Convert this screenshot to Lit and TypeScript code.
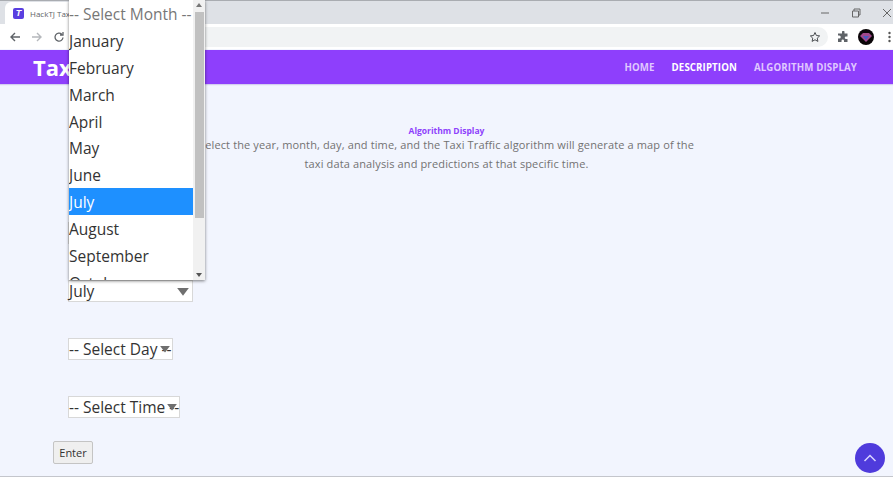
import { LitElement, html, css } from "lit";
import { customElement } from "lit/decorators.js";

const months = ["January","February","March","April","May","June","July","August","September","October"];

@customElement("app-root")
export class AppRoot extends LitElement {
  static styles = css`
    :host { display: block; position: relative; width: 893px; height: 477px; overflow: hidden; background: #f2f5fe; font-family: "Open Sans", sans-serif; color: #333; }
    .tabs { height: 23px; background: #dee1e6; border-top: 1px solid #a9acb1; display: flex; align-items: flex-end; }
    .tab { margin-left: 5px; width: 200px; height: 22px; background: #fff; border-radius: 6px 6px 0 0; display: flex; align-items: center; gap: 6px; padding-left: 8px; box-sizing: border-box; font-size: 8px; color: #5f6368; white-space: nowrap; overflow: hidden; }
    .fav { width: 11px; height: 11px; border-radius: 2px; background: #5a3fe0; color: #fff; font: italic bold 9px/11px "Liberation Sans", sans-serif; text-align: center; flex: none; }
    .spacer { flex: 1; }
    .win { display: flex; align-items: center; gap: 21px; padding-right: 1px; height: 22px; }
    .toolbar { height: 25px; background: #fff; display: flex; align-items: center; padding-left: 9px; box-sizing: border-box; }
    .navbtns { display: flex; gap: 10px; align-items: center; }
    .omni { flex: 1; height: 20px; margin-left: 8px; margin-right: 9px; background: #f1f3f4; border-radius: 10px; display: flex; justify-content: flex-end; align-items: center; padding-right: 7px; }
    .tools { display: flex; align-items: center; gap: 9px; padding-right: 2px; }
    .tools .dots { margin-left: 5px; }
    .avatar { width: 16px; height: 16px; border-radius: 50%; background: #0a0508; display: flex; align-items: center; justify-content: center; }
    nav { height: 34px; margin-top: 1px; background: #8e3ffc; display: flex; align-items: center; padding: 0 36px 0 33px; box-shadow: 0 1px 1px rgba(120,90,200,.25); }
    .brand { font-size: 22px; font-weight: 700; color: #fff; }
    .links { margin-left: auto; display: flex; gap: 17px; font-size: 9.7px; font-weight: 700; color: #e0c8ff; letter-spacing: 0.11px; }
    .links .on { color: #fff; }
    main { padding: 41px 0 0 53px; position: relative; }
    .head { margin-left: -53px; text-align: center; height: 48px; }
    .eyebrow { font-size: 8.5px; font-weight: 700; color: #8e3ffc; line-height: 12px; }
    .desc { font-size: 11px; line-height: 18.6px; color: #727272; letter-spacing: 0.13px; margin-top: -1px; }
    .selects { display: flex; flex-direction: column; align-items: flex-start; gap: 36px; margin-left: 15px; margin-top: 49px; }
    .sel { height: 22px; box-sizing: border-box; background: #fff; border: 1px solid #d8d8d8; font-size: 15.5px; line-height: 19px; color: #333; display: flex; align-items: center; white-space: nowrap; position: relative; }
    .sel svg { position: absolute; top: 7px; }
    .year { width: 100px; } .month { width: 125px; } .day { width: 105px; } .time { width: 112px; }
    button { display: block; margin-top: 23px; width: 40px; height: 23px; padding: 0; background: #efefef; border: 1px solid #c4c4c4; border-radius: 2px; font: 11px "Open Sans", sans-serif; color: #333; }
    .list { position: absolute; left: 69px; top: 0; width: 136px; height: 280px; background: #fff; box-shadow: 0 1px 3px rgba(0,0,0,.5); overflow: hidden; display: flex; }
    .items { flex: 1; font-size: 15.5px; color: #333; overflow: hidden; }
    .opt { height: 26.9px; line-height: 28.5px; white-space: nowrap; }
    .opt.first { color: #777; }
    .opt.sel-opt { background: #1e90ff; color: #fff; }
    .bar { width: 12px; background: #f1f1f1; position: relative; }
    .thumb { position: absolute; left: 2px; right: 1px; top: 12px; height: 206px; background: #c1c1c1; }
    .bar svg { position: absolute; left: 3px; }
    .top { position: absolute; right: 8px; bottom: 4px; width: 30px; height: 30px; border-radius: 50%; background: #4f3bdc; display: flex; align-items: center; justify-content: center; }
    .edge { position: absolute; left: 0; right: 0; bottom: 0; height: 1px; background: #c4c6cc; }
  `;

  private arrow(x: number, w: number) {
    return html`<svg style="left:${x}px" width="${w}" height="${w * 0.65}" viewBox="0 0 12 8"><path d="M0 0h12L6 8z" fill="#6f6f6f"/></svg>`;
  }

  render() {
    return html`
      <div class="tabs">
        <div class="tab"><span class="fav">T</span>HackTJ Taxi Traffic</div>
        <div class="spacer"></div>
        <div class="win">
          <svg width="10" height="10" viewBox="0 0 10 10"><path d="M1 5h8" stroke="#666" fill="none"/></svg>
          <svg width="10" height="10" viewBox="0 0 10 10"><path d="M1.500 3h6v6h-6zM3 3V1h6v6H7.500" stroke="#666" fill="none"/></svg>
          <svg width="10" height="10" viewBox="0 0 10 10"><path d="M1 1l8 8M9 1l-8 8" stroke="#666" fill="none"/></svg>
        </div>
      </div>
      <div class="toolbar">
        <div class="navbtns">
          <svg width="12" height="12" viewBox="0 0 12 12"><path d="M11 6H2M6 2L2 6l4 4" stroke="#5f6368" stroke-width="1.400" fill="none"/></svg>
          <svg width="12" height="12" viewBox="0 0 12 12"><path d="M1 6h9M6 2l4 4-4 4" stroke="#b5b8bc" stroke-width="1.400" fill="none"/></svg>
          <svg width="12" height="12" viewBox="0 0 12 12"><path d="M10 6.500A4 4 0 1 1 8.800 3.200M10 1v3H7" stroke="#5f6368" stroke-width="1.300" fill="none"/></svg>
        </div>
        <div class="omni">
          <svg width="12" height="12" viewBox="0 0 24 24"><path d="M12 3l2.800 6 6.500.8-4.800 4.500 1.300 6.500L12 17.500 6.200 20.800l1.300-6.500L2.700 9.800 9.200 9z" stroke="#4a4d51" stroke-width="2" fill="none"/></svg>
        </div>
        <div class="tools">
          <svg width="12" height="12" viewBox="0 0 24 24"><path d="M10 2a2.500 2.500 0 0 1 5 0v3h6v6h-3a2.500 2.500 0 0 0 0 5h3v6h-7v-2.500a2.500 2.500 0 0 0-5 0V22H2v-7h2.500a3 3 0 0 0 0-6H2V5h8z" fill="#5f6368"/></svg>
          <div class="avatar"><svg width="12" height="10" viewBox="0 0 12 10"><path d="M3 1h6l3 3-6 6-6-6z" fill="#a0488c"/><path d="M3 4h6L6 8z" fill="#4a5bc0"/></svg></div>
          <svg class="dots" width="3" height="12" viewBox="0 0 3 12"><circle cx="1.500" cy="2" r="1.200" fill="#555"/><circle cx="1.500" cy="6" r="1.200" fill="#555"/><circle cx="1.500" cy="10" r="1.200" fill="#555"/></svg>
        </div>
      </div>
      <nav>
        <div class="brand">Taxi Traffic</div>
        <div class="links"><span>HOME</span><span class="on">DESCRIPTION</span><span>ALGORITHM DISPLAY</span></div>
      </nav>
      <main>
        <div class="head">
          <div class="eyebrow">Algorithm Display</div>
          <div class="desc">Select the year, month, day, and time, and the Taxi Traffic algorithm will generate a map of the<br>taxi data analysis and predictions at that specific time.</div>
        </div>
        <div class="selects">
          <div class="sel year">2020</div>
          <div class="sel month">July${this.arrow(108, 12)}</div>
          <div class="sel day">-- Select Day --${this.arrow(91, 10)}</div>
          <div class="sel time">-- Select Time --${this.arrow(98, 10)}</div>
        </div>
        <button>Enter</button>
      </main>
      <div class="list">
        <div class="items">
          <div class="opt first">-- Select Month --</div>
          ${months.map(m => html`<div class="opt ${m === "July" ? "sel-opt" : ""}">${m}</div>`)}
        </div>
        <div class="bar">
          <svg style="top:3px" width="6" height="4" viewBox="0 0 6 4"><path d="M3 0l3 4H0z" fill="#777"/></svg>
          <div class="thumb"></div>
          <svg style="bottom:3px" width="6" height="4" viewBox="0 0 6 4"><path d="M0 0h6L3 4z" fill="#555"/></svg>
        </div>
      </div>
      <div class="top"><svg width="14" height="8" viewBox="0 0 14 8"><path d="M1.500 7L7 1.500 12.500 7" stroke="#d9d4ff" stroke-width="1.500" fill="none"/></svg></div>
      <div class="edge"></div>
    `;
  }
}
